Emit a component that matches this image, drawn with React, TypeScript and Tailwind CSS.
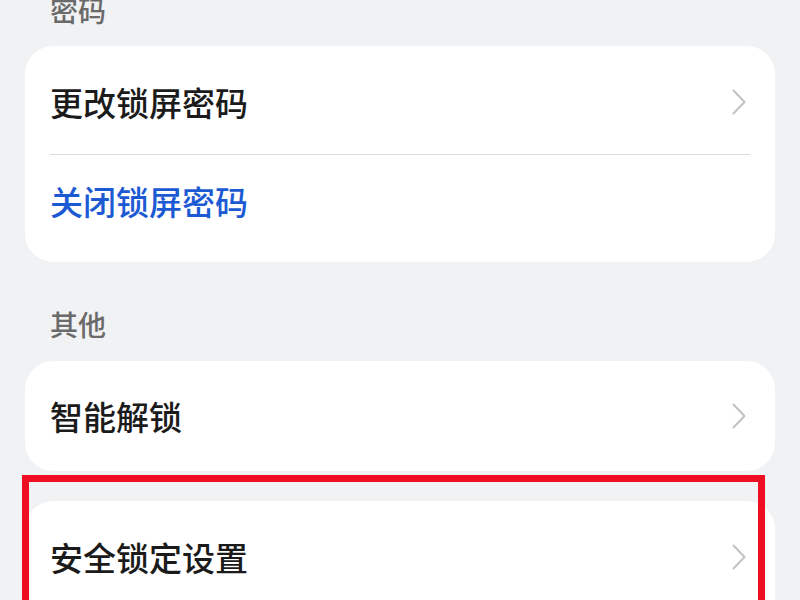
import {ReactNode} from "react";

function Chevron() {
    return (
        <svg width="16" height="28" viewBox="0 0 16 28" fill="none">
            <path d="M2.5 2.5 L13.5 14 L2.5 25.5" stroke="#c2c2c2" strokeWidth="2" strokeLinecap="round"
                  strokeLinejoin="round"/>
        </svg>
    );
}

function Row({children, blue, arrow = true, className}: { children: ReactNode, blue?: boolean, arrow?: boolean, className?: string }) {
    return (
        <div className={"flex items-center justify-between " + (className ?? "")}>
            <span className={"text-[33px] leading-none font-medium " + (blue ? "text-[#1c5ad4]" : "text-[#1b1b1b]")}>
                {children}
            </span>
            {arrow && <span className="pr-[3px]"><Chevron/></span>}
        </div>
    );
}

export default function App() {
    return (
        <div className="relative h-[600px] overflow-hidden bg-[#f1f2f4] px-[25px]"
             style={{fontFamily: '"Noto Sans CJK SC", "Noto Sans", sans-serif'}}>
            <div className="flex h-[46px] items-start pl-[25px]">
                <div className="-mt-[4px] text-[28px] leading-[28px] font-medium text-[#6a6a6a]">密码</div>
            </div>

            <div className="rounded-[28px] bg-white px-[25px]">
                <Row className="h-[108px] pt-[4px]">更改锁屏密码</Row>
                <div className="h-px bg-[#dadada]"/>
                <Row className="h-[107px] pb-[14px]" blue arrow={false}>关闭锁屏密码</Row>
            </div>

            <div className="flex h-[99px] items-end pb-[23px] pl-[25px]">
                <div className="text-[28px] leading-[28px] font-medium text-[#6a6a6a]">其他</div>
            </div>

            <div className="rounded-[28px] bg-white px-[25px]">
                <Row className="h-[110px]">智能解锁</Row>
            </div>

            <div className="mt-[30px] rounded-t-[28px] bg-white px-[25px]">
                <Row className="h-[112px]">安全锁定设置</Row>
            </div>

            <div className="absolute left-[22px] top-[475px] h-[200px] w-[743px] border-[7px] border-[#ee0f22]"/>
        </div>
    );
}
